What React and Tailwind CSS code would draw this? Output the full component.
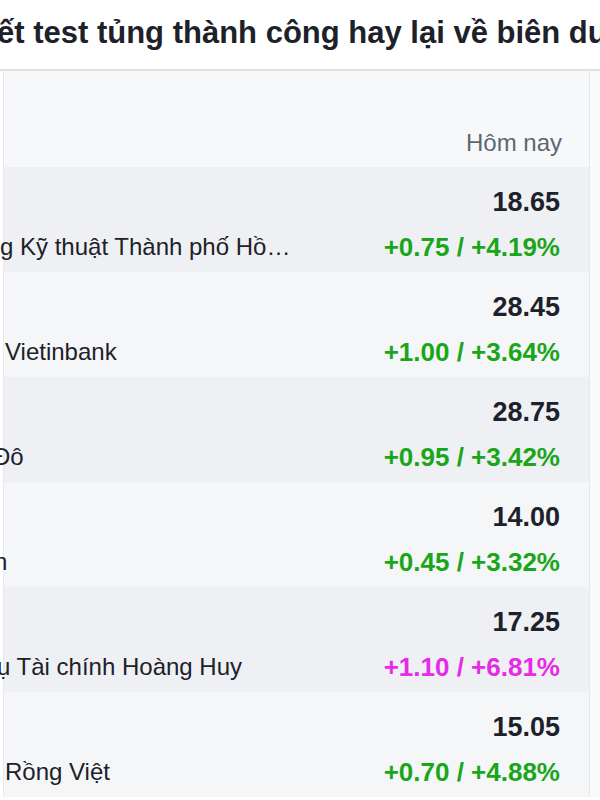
import React from "react";

const rows = [
  { name: "g Kỹ thuật Thành phố Hồ…", nameCls: "-ml-[4px]", price: "18.65", change: "+0.75 / +4.19%", color: "text-[#1aa61a]", bg: "bg-[#eef0f4]" },
  { name: "Vietinbank", nameCls: "ml-[1px]", price: "28.45", change: "+1.00 / +3.64%", color: "text-[#1aa61a]", bg: "bg-[#f5f6f8]" },
  { name: "Đô", nameCls: "-ml-[11px]", price: "28.75", change: "+0.95 / +3.42%", color: "text-[#1aa61a]", bg: "bg-[#eef0f4]" },
  { name: "n", nameCls: "-ml-[10px]", price: "14.00", change: "+0.45 / +3.32%", color: "text-[#1aa61a]", bg: "bg-[#f5f6f8]" },
  { name: "ụ Tài chính Hoàng Huy", nameCls: "-ml-[7px]", price: "17.25", change: "+1.10 / +6.81%", color: "text-[#e62ae6]", bg: "bg-[#eef0f4]" },
  { name: "Rồng Việt", nameCls: "ml-[1px]", price: "15.05", change: "+0.70 / +4.88%", color: "text-[#1aa61a]", bg: "bg-[#f5f6f8]" },
];

export default function App() {
  return (
    <div className="w-[600px] h-[800px] overflow-hidden bg-white font-['Liberation_Sans',Arial,sans-serif] text-[#1d2129]">
      <div className="h-[69px] flex items-center pb-[4px] whitespace-nowrap overflow-hidden">
        <span className="-ml-[3px] text-[31px] font-bold leading-none">ết test tủng thành công hay lại về biên du</span>
      </div>
      <div className="border-t-2 border-[#dfe1e5] bg-[#f9fafb] flex">
        <div className="w-[3px] shrink-0 bg-white" />
        <div className="w-[587px] shrink-0 border-l border-r border-[#e6e8ec] bg-[#f7f8fa]">
          <div className="h-[96px] flex items-end justify-end pr-[27px] pb-[9px]">
            <span className="text-[24px] leading-[30px] text-[#5f6670]">Hôm nay</span>
          </div>
          {rows.map((r, i) => (
            <div key={i} className={`h-[105px] flex flex-col pr-[29px] ${r.bg}`}>
              <div className="mt-[19px] flex justify-end">
                <span className="text-[27px] font-bold leading-[32px]">{r.price}</span>
              </div>
              <div className="mt-[13px] flex items-center justify-between whitespace-nowrap">
                <span className={`text-[24px] leading-[32px] text-[#1d2129] ${r.nameCls}`}>{r.name}</span>
                <span className={`text-[26px] font-bold leading-[32px] ${r.color}`}>{r.change}</span>
              </div>
            </div>
          ))}
        </div>
      </div>
    </div>
  );
}
